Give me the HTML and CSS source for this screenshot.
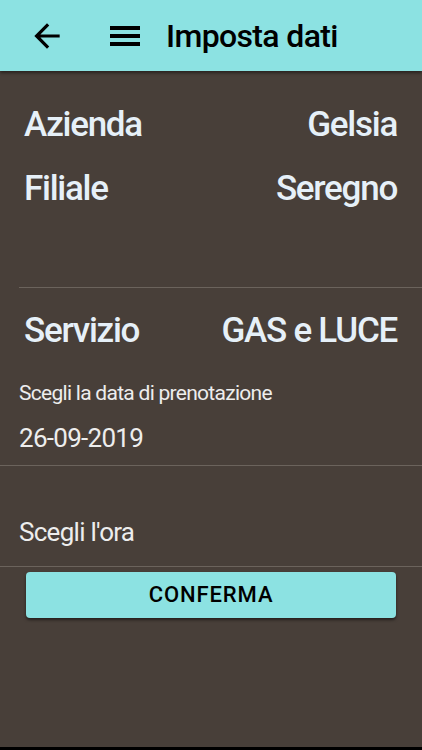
FILE: index.html
```html
<!DOCTYPE html>
<html lang="it">
<head>
  <meta charset="UTF-8">
  <meta name="viewport" content="width=device-width, initial-scale=1.0">
  <title>Imposta dati</title>
  <link rel="stylesheet" href="styles.css">
</head>
<body>
<div class="app">
  <header class="toolbar">
    <svg class="icon-back" viewBox="0 0 24 24"><path d="M20 11H7.83l5.59-5.59L12 4l-8 8 8 8 1.41-1.41L7.83 13H20v-2z"/></svg>
    <svg class="icon-menu" viewBox="0 0 24 24"><path d="M3 18h18v-2.4H3V18zm0-4.8h18v-2.4H3v2.4zM3 6v2.4h18V6H3z"/></svg>
    <h1 class="title">Imposta dati</h1>
  </header>

  <div class="content">
    <div class="row first">
      <span>Azienda</span>
      <span>Gelsia</span>
    </div>
    <div class="row">
      <span>Filiale</span>
      <span>Seregno</span>
    </div>
    <hr class="divider inset">
    <div class="row service">
      <span>Servizio</span>
      <span>GAS e LUCE</span>
    </div>
    <p class="label">Scegli la data di prenotazione</p>
    <p class="value">26-09-2019</p>
    <hr class="divider date-end">
    <p class="value time">Scegli l'ora</p>
    <hr class="divider time-end">
    <button class="confirm">CONFERMA</button>
  </div>
</div>
</body>
</html>
```

FILE: styles.css
```css
html {
  background: #000;
}
body {
  margin: 0;
  font-family: Roboto, "Liberation Sans", sans-serif;
  letter-spacing: -0.045em;
}
.app {
  min-height: 747px;
  background: #483f39;
}
.toolbar {
  height: 71px;
  display: flex;
  align-items: center;
  padding-left: 28px;
  background: #8ce2e2;
  box-shadow: 0 2px 3px rgba(0, 0, 0, 0.45);
  position: relative;
}
.icon-back {
  width: 38px;
  height: 38px;
}
.icon-menu {
  width: 40px;
  height: 40px;
  margin-left: 39px;
}
.title {
  margin: 0 0 0 21px;
  font-size: 32px;
  font-weight: 500;
  letter-spacing: -0.02em;
  color: #000;
}
.content {
  display: flex;
  flex-direction: column;
}
.row {
  display: flex;
  justify-content: space-between;
  padding: 0 25px 0 24px;
  font-size: 35px;
  font-weight: 500;
  letter-spacing: -0.036em;
  line-height: 64px;
  color: #e6f0f8;
}
.row.first {
  margin-top: 22px;
}
.row.service {
  margin-top: 11px;
}
.divider {
  border: none;
  border-top: 1px solid #6b635c;
  margin: 0;
  width: 100%;
}
.divider.inset {
  margin: 66px 0 0 19px;
  width: auto;
}
.label {
  margin: 16px 0 0;
  padding-left: 19px;
  font-size: 21px;
  line-height: 28px;
  color: #ededed;
}
.value {
  margin: 13px 0 0;
  padding-left: 19px;
  font-size: 26px;
  line-height: 36px;
  color: #ededed;
}
.divider.date-end {
  margin-top: 9px;
}
.value.time {
  margin-top: 48px;
}
.divider.time-end {
  margin-top: 16px;
}
.confirm {
  margin: 5px 26px 0;
  height: 46px;
  border: none;
  border-radius: 4px;
  background: #8ce2e2;
  box-shadow: 0 2px 3px rgba(0, 0, 0, 0.5);
  font-family: Roboto, "Liberation Sans", sans-serif;
  font-size: 22px;
  font-weight: 500;
  letter-spacing: 0.9px;
  line-height: 46px;
  color: #000;
  padding: 0;
}
```
